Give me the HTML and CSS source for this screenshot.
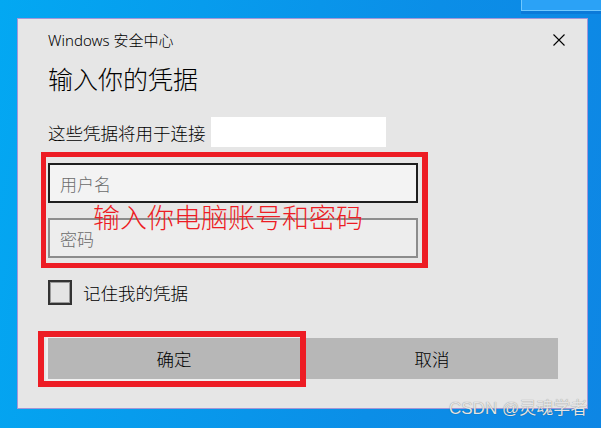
FILE: index.html
```html
<!DOCTYPE html>
<html lang="zh-CN">
<head>
<meta charset="utf-8">
<title>Windows 安全中心</title>
<link rel="stylesheet" href="styles.css">
</head>
<body>
<div class="desktop-win"></div>
<div class="dialog">
  <div class="titlebar">
    <span class="app">Windows 安全中心</span>
    <svg class="close" width="12" height="12" viewBox="0 0 12 12"><path d="M0.5 0.5 L11.5 11.5 M11.5 0.5 L0.5 11.5" stroke="#000" stroke-width="1.1" fill="none"/></svg>
  </div>
  <h1 class="heading">输入你的凭据</h1>
  <div class="target"><span>这些凭据将用于连接</span><span class="redact"></span></div>
  <div class="field field-active">用户名</div>
  <div class="field field-idle">密码</div>
  <div class="remember"><span class="check"></span><span class="remember-label">记住我的凭据</span></div>
  <div class="actions">
    <button class="btn btn-focus">确定</button>
    <button class="btn">取消</button>
  </div>
</div>
<div class="note-box note-fields"></div>
<div class="note-text">输入你电脑账号和密码</div>
<div class="note-box note-ok"></div>
<div class="watermark">CSDN @灵魂学者</div>
</body>
</html>
```
FILE: styles.css
```css
html, body {
  margin: 0;
  padding: 0;
}
body {
  width: 601px;
  height: 428px;
  overflow: hidden;
  position: relative;
  background: linear-gradient(100deg, #03a8f2 0%, #079ced 30%, #0b8ee7 65%, #0e86e4 100%);
  font-family: "Noto Sans CJK SC", "Noto Sans", sans-serif;
  font-weight: 300;
  display: flow-root;
}
.desktop-win {
  position: absolute;
  left: 521px;
  top: 0;
  width: 80px;
  height: 10px;
  background: #2ba2f6;
  border-left: 1px solid #6fc8ff;
  border-bottom: 1px solid #6fc8ff;
  box-shadow: 0 3px 0 #0b7ad9;
}
.dialog {
  margin: 18px 0 0 17px;
  width: 571px;
  height: 391px;
  box-sizing: border-box;
  border: 1px solid #a396d8;
  background: #e6e6e6;
  padding: 11px 29px 0 30px;
  color: #000;
}
.titlebar {
  height: 20px;
  display: flex;
  align-items: center;
  justify-content: space-between;
}
.app {
  font-family: "Segoe UI", "Noto Sans", "Noto Sans CJK SC", sans-serif;
  font-size: 15px;
  line-height: 20px;
}
.close {
  margin-right: -7px;
  display: block;
}
.heading {
  margin: 13px 0 0;
  font-size: 25px;
  line-height: 30px;
  font-weight: 300;
}
.target {
  margin-top: 24px;
  height: 30px;
  display: flex;
  align-items: center;
  font-size: 17.5px;
}
.redact {
  width: 175px;
  height: 30px;
  background: #fff;
  margin-left: 5.5px;
}
.field {
  box-sizing: border-box;
  width: 370px;
  height: 40px;
  padding-left: 10px;
  display: flex;
  align-items: center;
  font-size: 17px;
  color: #6b6b6b;
}
.field-active {
  margin-top: 16px;
  border: 2px solid #1e1e1e;
  background: #f3f3f3;
}
.field-idle {
  margin-top: 15px;
  border: 2px solid #8c8c8c;
  background: #ededed;
}
.remember {
  margin-top: 22px;
  height: 25px;
  display: flex;
  align-items: center;
}
.check {
  box-sizing: border-box;
  width: 24px;
  height: 25px;
  border: 2px solid #333;
  box-shadow: inset 0 0 0 1px #9a9a9a;
  background: #e4e4e4;
}
.remember-label {
  margin-left: 11px;
  font-size: 17.5px;
}
.actions {
  margin-top: 33px;
  display: flex;
  gap: 6px;
}
.btn {
  width: 252px;
  height: 41px;
  border: 0;
  padding: 0;
  background: #b7b7b7;
  font-family: "Noto Sans CJK SC", sans-serif;
  font-weight: 300;
  font-size: 17.5px;
  color: #000;
}
.btn-focus {
  outline: 2px solid #f0f0f0;
}
.note-box {
  position: absolute;
  box-sizing: border-box;
  border: 5px solid #ed1c24;
}
.note-fields {
  left: 41px;
  top: 152px;
  width: 387px;
  height: 116px;
  border-right-width: 6px;
}
.note-ok {
  left: 38px;
  top: 331px;
  width: 268px;
  height: 56px;
  border-width: 6px;
}
.note-text {
  position: absolute;
  left: 93px;
  top: 202px;
  font-size: 27px;
  line-height: 30px;
  color: #ed1c24;
}
.watermark {
  position: absolute;
  left: 449px;
  top: 398px;
  font-family: "Liberation Sans", "Noto Sans CJK SC", sans-serif;
  font-weight: 400;
  font-size: 17px;
  line-height: 22px;
  color: #e4e4e4;
  text-shadow: 0 0 1px rgba(0, 0, 0, 0.45);
}
```
